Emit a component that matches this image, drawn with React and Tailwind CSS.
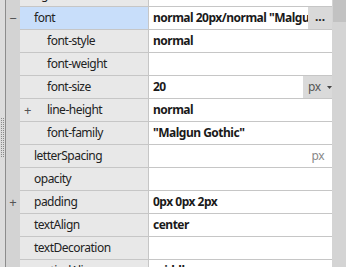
import React from "react";

const rows = [
  { name: "bgColor", level: 0, value: "" },
  { name: "font", level: 0, value: 'normal 20px/normal "Malgun Gothic"', gutter: "−", selected: true },
  { name: "font-style", level: 1, value: "normal" },
  { name: "font-weight", level: 1, value: "" },
  { name: "font-size", level: 1, value: "20", unitSelect: true },
  { name: "line-height", level: 1, value: "normal", plus: true },
  { name: "font-family", level: 1, value: '"Malgun Gothic"' },
  { name: "letterSpacing", level: 0, value: "", unit: "px" },
  { name: "opacity", level: 0, value: "" },
  { name: "padding", level: 0, value: "0px 0px 2px", gutter: "+" },
  { name: "textAlign", level: 0, value: "center" },
  { name: "textDecoration", level: 0, value: "" },
  { name: "verticalAlign", level: 0, value: "middle" },
];

function Grip() {
  const dots = [];
  for (let i = 0; i < 20; i++) {
    dots.push(<rect key={"a" + i} x="1" y={i * 2} width="1" height="1" fill="#8a8a8a" />);
    dots.push(<rect key={"b" + i} x="3" y={i * 2} width="1" height="1" fill="#8a8a8a" />);
  }
  return (
    <svg width="5" height="40" viewBox="0 0 5 40" className="block">
      {dots}
    </svg>
  );
}

function Row({ r }) {
  return (
    <div className="flex h-[23px] flex-none">
      <div className="flex w-[14px] flex-none items-center justify-center text-[13px] leading-none text-[#555]">
        {r.gutter || ""}
      </div>
      <div
        className={`relative flex w-[129px] flex-none items-center border-b border-r border-[#c6c6c6] ${
          r.selected ? "bg-[#c8defa]" : "bg-[#e8e8e8]"
        } ${r.level === 1 ? "pl-[27px]" : "pl-[14px]"}`}
      >
        {r.plus && (
          <span className="absolute left-[4px] top-[3px] text-[13px] leading-[16px] text-[#555]">+</span>
        )}
        <span className="whitespace-nowrap text-[12px] tracking-[-0.5px] text-[#222]">{r.name}</span>
      </div>
      <div className="flex min-w-0 flex-1 items-stretch border-b border-[#c6c6c6] bg-white">
        <div className="flex min-w-0 flex-1 items-center overflow-hidden pl-[4px]">
          <span className="whitespace-nowrap text-[12px] font-bold tracking-[-0.5px] text-[#1a1a1a]">
            {r.value}
          </span>
        </div>
        {r.selected && (
          <div className="flex w-[24px] flex-none items-center justify-center bg-[#d9d9d9] pb-[3px] text-[12px] font-bold text-[#222]">
            ...
          </div>
        )}
        {r.unitSelect && (
          <div className="flex w-[29px] flex-none items-center gap-[6px] bg-[#dadada] pl-[5px] text-[12px] tracking-[-0.5px] text-[#555]">
            <span>px</span>
            <svg width="5" height="3" viewBox="0 0 5 3">
              <path d="M0 0h5L2.5 3z" fill="#444" />
            </svg>
          </div>
        )}
        {r.unit && (
          <div className="flex flex-none items-center pr-[8px] text-[12px] tracking-[-0.5px] text-[#888]">
            {r.unit}
          </div>
        )}
      </div>
    </div>
  );
}

export default function App() {
  return (
    <div
      className="flex h-[267px] w-[346px] overflow-hidden bg-white"
      style={{ fontFamily: '"Noto Sans", "Open Sans", sans-serif' }}
    >
      <div className="w-[5px] flex-none bg-[#dcdcdc] pt-[118px]">
        <Grip />
      </div>
      <div className="w-[1px] flex-none bg-[#8c8c8c]" />
      <div className="flex min-w-0 flex-1 flex-col bg-[#d3d3d3]">
        <div className="-mt-[16px] flex flex-col">
          {rows.map((r, i) => (
            <Row key={i} r={r} />
          ))}
        </div>
      </div>
      <div className="flex w-[14px] flex-none flex-col bg-[#d4d4d4]">
        <div className="ml-[1px] h-[22px] bg-[#c2c2c2]" />
      </div>
    </div>
  );
}
